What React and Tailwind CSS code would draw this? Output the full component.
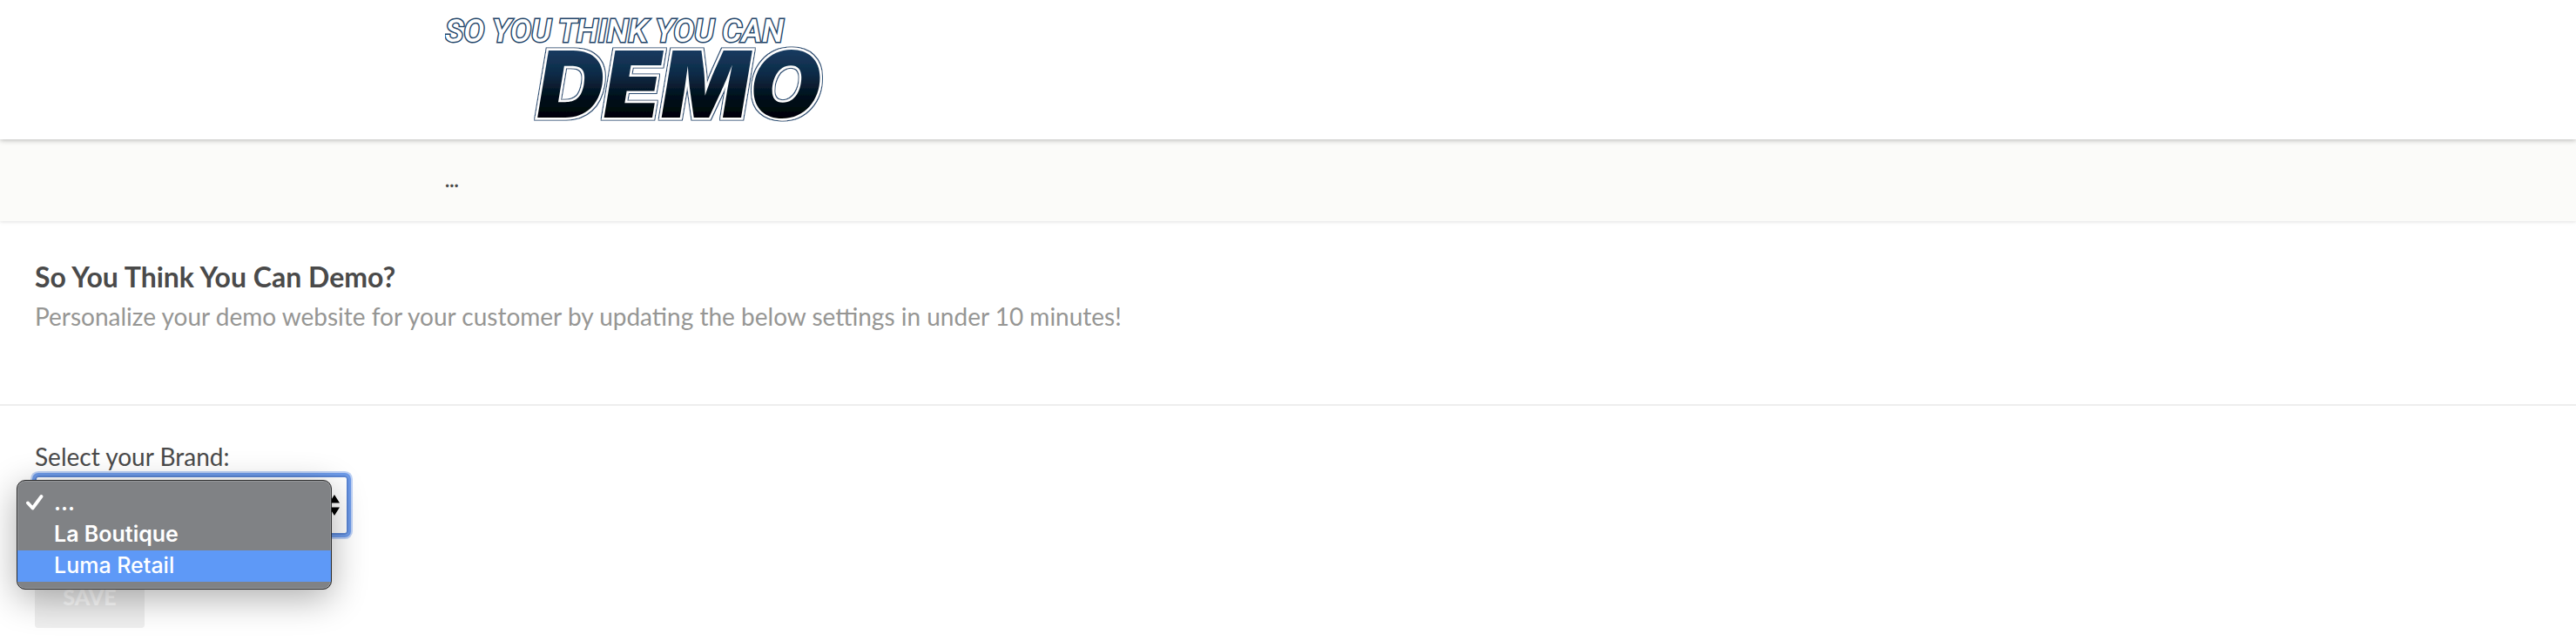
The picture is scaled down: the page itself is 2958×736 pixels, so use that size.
import { useState } from "react";

const BRANDS = ["...", "La Boutique", "Luma Retail"];

function Logo() {
  return (
    <svg viewBox="0 0 450 160" className="block h-40 w-[450px]" role="img" aria-label="So You Think You Can Demo">
      <defs>
        <linearGradient id="ink" gradientUnits="userSpaceOnUse" x1="0" y1="58" x2="0" y2="136">
          <stop offset="0" stopColor="#163a5f" />
          <stop offset="0.35" stopColor="#0e2b47" />
          <stop offset="0.65" stopColor="#03121f" />
          <stop offset="1" stopColor="#000205" />
        </linearGradient>
        <filter id="rim" x="-5%" y="-10%" width="110%" height="120%">
          <feMorphology in="SourceAlpha" operator="dilate" radius="1" result="grown" />
          <feFlood floodColor="#2d5075" />
          <feComposite in2="grown" operator="in" result="edge" />
          <feMerge>
            <feMergeNode in="edge" />
            <feMergeNode in="SourceGraphic" />
          </feMerge>
        </filter>
      </defs>
      <text
        x="0"
        y="48"
        fontFamily="Roboto, sans-serif"
        fontStyle="italic"
        fontWeight="500"
        fontSize="36"
        fill="#fff"
        stroke="#1f4468"
        strokeWidth="3"
        paintOrder="stroke"
      >
        SO YOU THINK YOU CAN
      </text>
      <text
        x="106"
        y="135"
        fontFamily="Inter, sans-serif"
        fontStyle="italic"
        fontWeight="900"
        fontSize="106"
        fill="url(#ink)"
        stroke="#fff"
        strokeWidth="5"
        paintOrder="stroke"
        filter="url(#rim)"
      >
        DEMO
      </text>
    </svg>
  );
}

function BrandSelect() {
  const [brand, setBrand] = useState(BRANDS[0]);
  return (
    <div className="relative mt-0.5 w-[360px]">
      <select
        id="brand"
        value={brand}
        onChange={(e) => setBrand(e.target.value)}
        className="block h-[68px] w-full appearance-none rounded-sm border-2 border-[#5b86d4] bg-white px-4 text-[28px] text-[#4a4a4a] outline-3 outline-[#6d9ae8] ring-5 ring-[#bfd2f5]"
      >
        {BRANDS.map((b) => (
          <option key={b}>{b}</option>
        ))}
      </select>
      <svg viewBox="0 0 12 24" className="pointer-events-none absolute top-[22px] right-2.5 h-6 w-3" aria-hidden="true">
        <path d="M6 0l6 9.500H0zM6 24l6-9.500H0z" fill="#000" />
      </svg>
      <ul
        role="listbox"
        aria-label="Brands"
        className="absolute top-[5px] -left-[21px] w-[362px] rounded-[10px] border border-[#2b2b2c] bg-[#808285] py-2 font-[Inter,sans-serif] text-[25px] leading-[34px] font-semibold text-white shadow-[inset_0_0_0_1px_#97999c,0_10px_40px_rgba(0,0,0,0.32)]"
      >
        {BRANDS.map((b, i) => (
          <li
            key={b}
            role="option"
            aria-selected={b === brand}
            className={i === 2 ? "flex h-9 items-start bg-[#5e99f7] font-medium" : "flex h-9 items-start"}
          >
            <span className="flex h-[34px] w-[42px] shrink-0 items-center pl-2.5">
              {b === brand && (
                <svg viewBox="0 0 20 18" className="h-[18px] w-5" aria-hidden="true">
                  <path d="M2 9.500l5.500 6L17.500 2" fill="none" stroke="#fff" strokeWidth="3.800" strokeLinecap="round" strokeLinejoin="round" />
                </svg>
              )}
            </span>
            {b}
          </li>
        ))}
      </ul>
    </div>
  );
}

export default function App() {
  return (
    <div className="bg-white font-[Lato,sans-serif] text-[#4a4a4a]">
      <header className="relative bg-white shadow-[0_1px_6px_rgba(0,0,0,0.28)]">
        <div className="mx-auto max-w-[1936px]">
          <Logo />
        </div>
      </header>
      <nav className="bg-[#fbfbf9] shadow-[0_1px_4px_rgba(0,0,0,0.12)]">
        <div className="mx-auto max-w-[1936px] py-8 text-[22px] leading-[30px] font-bold">...</div>
      </nav>
      <main>
        <section className="border-b-2 border-[#eeeeee] px-10 pt-10 pb-20">
          <h1 className="text-[32px] leading-[48px] font-bold">So You Think You Can Demo?</h1>
          <p className="text-[28px] leading-[42px] text-[#969694]">
            Personalize your demo website for your customer by updating the below settings in under 10 minutes!
          </p>
        </section>
        <form className="px-10 pt-[38px] pb-4" onSubmit={(e) => e.preventDefault()}>
          <label htmlFor="brand" className="block text-[28px] leading-10">
            Select your Brand:
          </label>
          <BrandSelect />
          <button type="submit" className="mt-10 h-[67px] w-[126px] rounded-sm bg-[#efefef] pb-1 text-[25px] font-black text-white">
            SAVE
          </button>
        </form>
      </main>
    </div>
  );
}
